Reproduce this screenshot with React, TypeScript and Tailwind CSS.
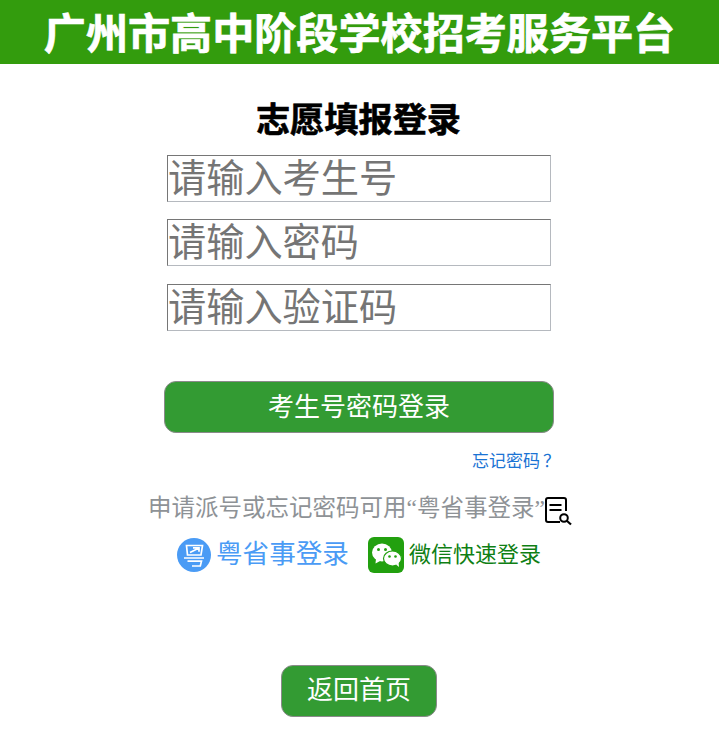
import React from "react";

const sans = "font-['Liberation_Sans','Noto_Sans_CJK_SC',sans-serif]";
const serif = "font-['Liberation_Serif','Noto_Sans_CJK_SC',serif]";

function GdIcon() {
  return (
    <svg width="34" height="34" viewBox="0 0 34 34" className="shrink-0">
      <circle cx="17" cy="17" r="17" fill="#4a9bf5" />
      <path d="M9.500 7.500h16l-1.500 9.500H10.500zM13 14.500l9-4.500M16 9.800h6v4" fill="none" stroke="#fff" strokeWidth="1.700" />
      <path d="M7 20h20M10.500 23.200h14l-1.200 4.800H15" fill="none" stroke="#fff" strokeWidth="1.700" />
    </svg>
  );
}

function WechatIcon() {
  return (
    <svg width="36" height="36" viewBox="0 0 36 36" className="shrink-0">
      <rect width="36" height="36" rx="6" fill="#22a00f" />
      <ellipse cx="14" cy="15.500" rx="10" ry="9" fill="#fff" />
      <path d="M8 21.500l-.5 5 5.500-3z" fill="#fff" />
      <ellipse cx="24.500" cy="21.500" rx="9" ry="7.500" fill="#fff" stroke="#22a00f" strokeWidth="1.200" />
      <path d="M28 27.500l3 2.500-.5-5z" fill="#fff" />
      <circle cx="10.500" cy="12.500" r="1.500" fill="#22a00f" />
      <circle cx="17.500" cy="12.500" r="1.500" fill="#22a00f" />
      <circle cx="21.500" cy="19.500" r="1.300" fill="#22a00f" />
      <circle cx="27.500" cy="19.500" r="1.300" fill="#22a00f" />
    </svg>
  );
}

function GuideIcon() {
  return (
    <svg width="27" height="29" viewBox="0 0 27 29" className="shrink-0 mt-[5px]">
      <path d="M15 25H3a2 2 0 0 1-2-2V3a2 2 0 0 1 2-2h16a2 2 0 0 1 2 2v11" fill="none" stroke="#000" strokeWidth="2" />
      <path d="M4.500 8h12M4.500 13h12" stroke="#000" strokeWidth="2" />
      <circle cx="19" cy="21" r="3.800" fill="none" stroke="#000" strokeWidth="2" />
      <path d="M21.500 23.500l4.500 4" stroke="#000" strokeWidth="2.200" />
    </svg>
  );
}

function Field({ placeholder, extra = "" }: { placeholder: string; extra?: string }) {
  return (
    <input
      placeholder={placeholder}
      className={`block w-[384px] h-[47px] ml-[167px] border border-t-[#767676] border-l-[#767676] border-r-[#b5b9bf] border-b-[#b5b9bf] bg-white px-0 text-[38.2px] placeholder:text-[#757575] outline-none ${sans} ${extra}`}
    />
  );
}

export default function App() {
  return (
    <div className={`w-[719px] min-h-[752px] bg-white ${sans}`}>
      <div className="h-16 bg-[#339c0d] text-center text-[42.1px] leading-[70px] font-bold text-white [-webkit-text-stroke:0.7px_white]">广州市高中阶段学校招考服务平台</div>

      <h1 className="mt-[34px] pr-[2px] text-center text-[34.2px] leading-[44px] font-bold text-black [-webkit-text-stroke:0.6px_black]">志愿填报登录</h1>

      <div className="mt-[13px] flex flex-col gap-[17px]">
        <Field placeholder="请输入考生号" />
        <Field placeholder="请输入密码" />
        <Field placeholder="请输入验证码" extra="mt-px" />
      </div>

      <button className="block ml-[164px] mt-[50px] w-[390px] h-[52px] rounded-xl border border-[#8a8a8a] bg-[#339b33] pt-px text-[26px] text-white">考生号密码登录</button>

      <div className={`mt-[19px] ml-[472px] whitespace-nowrap text-[17px] leading-5 text-[#1a73d4] ${serif}`}>
        忘记密码<span className="pl-[3px]">？</span>
      </div>

      <div className="mt-[20px] ml-[148px] flex items-start">
        <span className={`text-[23.5px] leading-8 text-[#8e9296] whitespace-nowrap ${serif}`}>申请派号或忘记密码可用“粤省事登录”</span>
        <GuideIcon />
      </div>

      <div className="mt-[9px] ml-[177px] flex items-center">
        <GdIcon />
        <span className="ml-[5px] text-[26.6px] text-[#4a9bf5] whitespace-nowrap">粤省事登录</span>
        <span className="ml-[19px]"><WechatIcon /></span>
        <span className="ml-[5px] text-[22px] text-[#0f7f14] whitespace-nowrap">微信快速登录</span>
      </div>

      <button className="block ml-[281px] mt-[90px] w-[156px] h-[52px] rounded-xl border border-[#8a8a8a] bg-[#339b33] text-[26px] text-white">返回首页</button>
    </div>
  );
}
